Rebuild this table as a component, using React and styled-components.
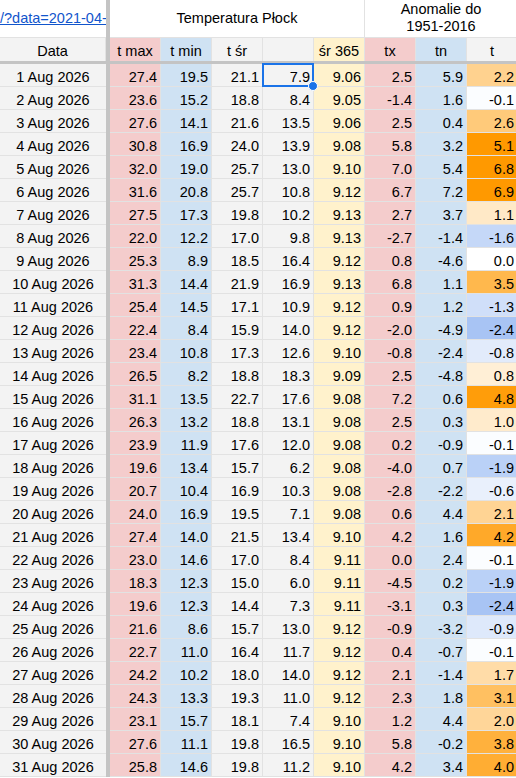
import React from "react";
import styled, { createGlobalStyle } from "styled-components";

const GlobalStyle = createGlobalStyle`
  html, body {
    margin: 0;
    padding: 0;
    background: #ffffff;
    overflow: hidden;
  }
  body {
    font-family: "Liberation Sans", Arial, sans-serif;
  }
`;

const fills = {
  white: "#ffffff",
  gray: "#f3f3f3",
  pink: "#f4cccc",
  blue: "#cfe2f3",
  yellow: "#fff2cc",
};

// fill of each numeric column, the last one (t) uses a colour scale
const columnFills = ["pink", "blue", "gray", "gray", "yellow", "pink", "blue"];

const headers = [
  { label: "Data", fill: "gray" },
  { label: "t max", fill: "pink" },
  { label: "t min", fill: "blue" },
  { label: "t śr", fill: "gray" },
  { label: "", fill: "gray" },
  { label: "śr 365", fill: "yellow" },
  { label: "tx", fill: "pink" },
  { label: "tn", fill: "blue" },
  { label: "t", fill: "gray" },
];

const raw = `
27.4 19.5 21.1 7.9 9.06 2.5 5.9 2.2
23.6 15.2 18.8 8.4 9.05 -1.4 1.6 -0.1
27.6 14.1 21.6 13.5 9.06 2.5 0.4 2.6
30.8 16.9 24.0 13.9 9.08 5.8 3.2 5.1
32.0 19.0 25.7 13.0 9.10 7.0 5.4 6.8
31.6 20.8 25.7 10.8 9.12 6.7 7.2 6.9
27.5 17.3 19.8 10.2 9.13 2.7 3.7 1.1
22.0 12.2 17.0 9.8 9.13 -2.7 -1.4 -1.6
25.3 8.9 18.5 16.4 9.12 0.8 -4.6 0.0
31.3 14.4 21.9 16.9 9.13 6.8 1.1 3.5
25.4 14.5 17.1 10.9 9.12 0.9 1.2 -1.3
22.4 8.4 15.9 14.0 9.12 -2.0 -4.9 -2.4
23.4 10.8 17.3 12.6 9.10 -0.8 -2.4 -0.8
26.5 8.2 18.8 18.3 9.09 2.5 -4.8 0.8
31.1 13.5 22.7 17.6 9.08 7.2 0.6 4.8
26.3 13.2 18.8 13.1 9.08 2.5 0.3 1.0
23.9 11.9 17.6 12.0 9.08 0.2 -0.9 -0.1
19.6 13.4 15.7 6.2 9.08 -4.0 0.7 -1.9
20.7 10.4 16.9 10.3 9.08 -2.8 -2.2 -0.6
24.0 16.9 19.5 7.1 9.08 0.6 4.4 2.1
27.4 14.0 21.5 13.4 9.10 4.2 1.6 4.2
23.0 14.6 17.0 8.4 9.11 0.0 2.4 -0.1
18.3 12.3 15.0 6.0 9.11 -4.5 0.2 -1.9
19.6 12.3 14.4 7.3 9.11 -3.1 0.3 -2.4
21.6 8.6 15.7 13.0 9.12 -0.9 -3.2 -0.9
22.7 11.0 16.4 11.7 9.12 0.4 -0.7 -0.1
24.2 10.2 18.0 14.0 9.12 2.1 -1.4 1.7
24.3 13.3 19.3 11.0 9.12 2.3 1.8 3.1
23.1 15.7 18.1 7.4 9.10 1.2 4.4 2.0
27.6 11.1 19.8 16.5 9.10 5.8 -0.2 3.8
25.8 14.6 19.8 11.2 9.10 4.2 3.4 4.0
`;

const rows = raw
  .trim()
  .split("\n")
  .map((line, i) => ({ date: `${i + 1} Aug 2026`, values: line.split(" ") }));

const mix = (a, b, t) =>
  a.map((c, i) => Math.round(c + (b[i] - c) * t));

const anomalyColor = (value) => {
  const v = parseFloat(value);
  const white = [255, 255, 255];
  const [r, g, b] =
    v >= 0
      ? mix(white, [255, 153, 0], Math.min(v / 5, 1))
      : mix(white, [164, 194, 244], Math.min(-v / 2.5, 1));
  return `rgb(${r}, ${g}, ${b})`;
};

const App = () => {
  return (
    <>
      <GlobalStyle />
      <Sheet>
        <FreezeColumn />
        <FreezeRow />

        <LinkCell>
          <Link>/?data=2021-04-</Link>
        </LinkCell>
        <TitleCell $span={5}>Temperatura Płock</TitleCell>
        <TitleCell $span={3}>
          Anomalie do
          <br />
          1951-2016
        </TitleCell>

        {headers.map((h, i) => (
          <Cell key={h.label + i} $fill={h.fill} $center $header>
            {h.label}
          </Cell>
        ))}

        {rows.map((row, r) => (
          <React.Fragment key={row.date}>
            <Cell $fill="gray" $center $first>
              {row.date}
            </Cell>
            {row.values.map((v, c) => (
              <Cell
                key={c}
                $fill={columnFills[c]}
                $bg={c === 7 ? anomalyColor(v) : undefined}
              >
                {v}
                {r === 0 && c === 3 && (
                  <Selection>
                    <Handle />
                  </Selection>
                )}
              </Cell>
            ))}
          </React.Fragment>
        ))}
      </Sheet>
    </>
  );
};

const Sheet = styled.div`
  display: grid;
  grid-template-columns: 106px 4px repeat(8, 51px);
  grid-template-rows: 38px 23px 3px repeat(31, 23px);
  width: 518px;
  font-family: "Liberation Sans", Arial, sans-serif;
  font-size: 14.5px;
  color: #000000;
`;

const FreezeColumn = styled.div`
  grid-column: 2;
  grid-row: 1 / -1;
  background: #c4c4c4;
`;

const FreezeRow = styled.div`
  grid-column: 1 / -1;
  grid-row: 3;
  background: #c4c4c4;
`;

const Cell = styled.div`
  position: relative;
  box-sizing: border-box;
  display: flex;
  align-items: flex-end;
  justify-content: ${(p) => (p.$center ? "center" : "flex-end")};
  padding: 0 3px ${(p) => (p.$header ? "2px" : "1px")};
  background: ${(p) => p.$bg || fills[p.$fill]};
  border-right: ${(p) => (p.$first ? "none" : "1px solid #e2e2e2")};
  border-bottom: ${(p) => (p.$header ? "none" : "1px solid #e2e2e2")};
  line-height: 16px;
  white-space: nowrap;
`;

const LinkCell = styled.div`
  box-sizing: border-box;
  display: flex;
  align-items: center;
  overflow: hidden;
  white-space: nowrap;
  border-bottom: 1px solid #e2e2e2;
  padding-bottom: 1px;
`;

const Link = styled.a`
  color: #1155cc;
  text-decoration: underline;
  cursor: pointer;
`;

const TitleCell = styled.div`
  grid-column: span ${(p) => p.$span};
  box-sizing: border-box;
  display: flex;
  align-items: center;
  justify-content: center;
  text-align: center;
  line-height: 17px;
  border-right: 1px solid #e2e2e2;
  border-bottom: 1px solid #e2e2e2;
  padding-bottom: 1px;
`;

const Selection = styled.div`
  position: absolute;
  top: -1px;
  left: -1px;
  right: -1px;
  bottom: -1px;
  border: 2px solid #1a73e8;
  z-index: 2;
  pointer-events: none;
`;

const Handle = styled.div`
  position: absolute;
  right: -6px;
  bottom: -6px;
  width: 8px;
  height: 8px;
  border-radius: 50%;
  background: #1a73e8;
  border: 1px solid #ffffff;
`;

export default App;
